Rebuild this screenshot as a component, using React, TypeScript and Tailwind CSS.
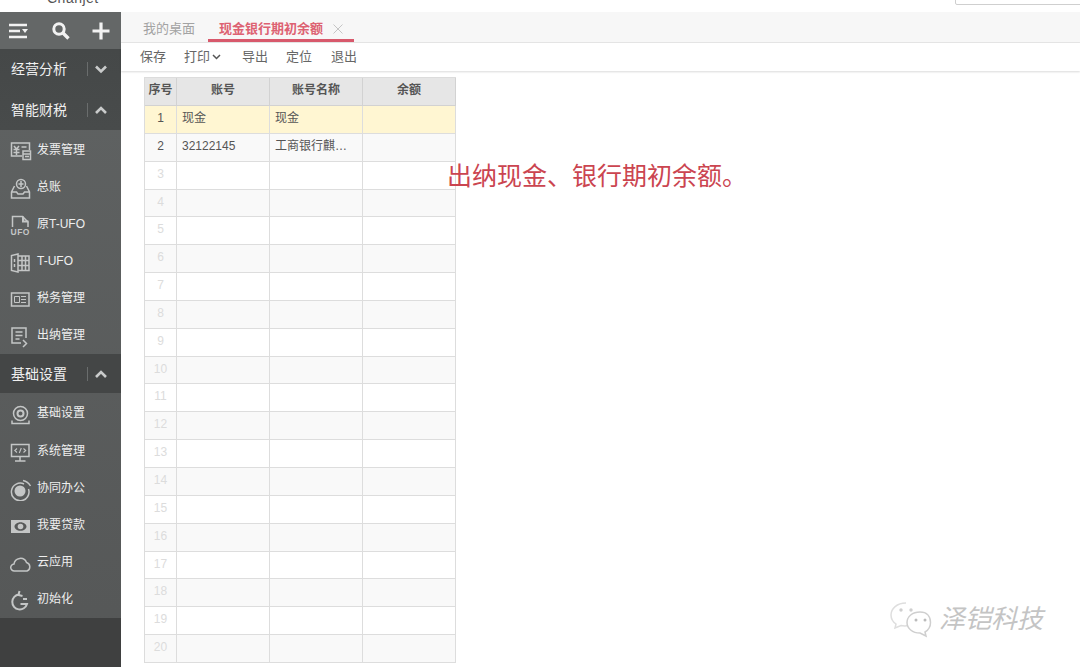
import React from "react";

const font = { fontFamily: '"Liberation Sans","Noto Sans CJK SC",sans-serif' };

const s = { fill: "none", stroke: "#c4c6c6", strokeWidth: 1.5 } as const;

const icons: Record<string, React.ReactNode> = {
  invoice: (
    <>
      <path {...s} d="M12 15H1.500V2H19.500V9" />
      <path {...s} d="M4 5l2.500 3 2.500-3M3.500 8.500h6M3.500 11.500h6M6.500 8V14M11.500 6h5" />
      <path {...s} d="M13 10h7.500v8.500H13zM13 13h7.500M15 15.500h4" />
    </>
  ),
  ledger: (
    <>
      <circle {...s} cx="11" cy="6" r="4.500" />
      <path {...s} d="M11 3v6M8.500 6h5" />
      <path {...s} d="M4.500 8L1.500 14v6h18v-6l-3-6M1.500 14h5l1.500 2h5l1.500-2h5" />
    </>
  ),
  ufo: (
    <>
      <path {...s} d="M2.500 12V1.500h10l5.500 5.500V12" />
      <path fill="#c4c6c6" d="M12 1.500h2v4h4.500v2H12z" />
      <text x="0.500" y="20" fontSize="8.500" fontWeight="700" fill="#c4c6c6" fontFamily="Liberation Sans" letterSpacing="0.500">UFO</text>
    </>
  ),
  building: (
    <>
      <path {...s} d="M8 2L1.500 3.500v15L8 20zM8 4h11v14.500H8M12 4v14.500M15.500 4v14.500M8 8.500h11M8 13.500h11" />
      <path {...s} d="M4.500 7v3M4.500 12v3" />
    </>
  ),
  tax: (
    <>
      <path {...s} d="M1.500 4h17.500v13H1.500z" />
      <path {...s} strokeWidth="1" d="M4.500 7.500h5v6h-5zM11 7.500h5M11 10.500h5M11 13.500h5" />
    </>
  ),
  cashier: (
    <>
      <path {...s} d="M16 12V2H2v15h9" />
      <path {...s} d="M5.500 6h7M5.500 9.500h7M5.500 13h4M13 14l3.500 3.500L13 21" />
    </>
  ),
  gear: (
    <>
      <circle {...s} cx="10.500" cy="8.500" r="7" />
      <circle {...s} strokeWidth="2" cx="10.500" cy="8.500" r="3" />
      <path {...s} d="M2 15.500v3h17v-3" />
    </>
  ),
  monitor: (
    <>
      <path {...s} d="M1.500 2.500h17.500v12H1.500zM10 15v3.500M5 19h10.500" />
      <path {...s} strokeWidth="1.100" d="M7 6.500L4.800 8.500 7 10.500M13.500 6.500L15.700 8.500 13.500 10.500M11.300 6L9.300 11" />
    </>
  ),
  office: (
    <>
      <circle fill="#c4c6c6" cx="10" cy="12" r="5.500" />
      <path {...s} d="M14 5A8.800 8.800 0 1 0 18.500 10" />
      <path {...s} d="M13 1.500A11 11 0 0 1 20.500 7" />
    </>
  ),
  loan: (
    <>
      <path fill="#c4c6c6" fillRule="evenodd" d="M1 4h19v13H1zM10.500 6.200c-3.500 0-6 2.300-6 4.300s2.500 4.300 6 4.300 6-2.300 6-4.300-2.500-4.300-6-4.300z" />
      <circle fill="#c4c6c6" cx="10.500" cy="10.500" r="2.800" />
    </>
  ),
  cloud: (
    <path {...s} d="M5.500 18H4.500a3.500 3.500 0 0 1-.5-7 6.500 6.500 0 0 1 12.500-1.500 4.500 4.500 0 0 1 .5 8.500z" />
  ),
  init: (
    <>
      <path {...s} strokeWidth="2" d="M9 4.500a7.500 7.500 0 1 0 8 9.500H10.500" />
      <path {...s} strokeWidth="2" d="M9.500 1l-1 4 4 1" />
      <path {...s} strokeWidth="2" d="M13 9h4" />
    </>
  ),
};

function Item({ icon, label, className = "h-[37px]" }: { icon: string; label: string; className?: string }) {
  return (
    <div className={`flex items-center pl-[10px] ${className}`}>
      <svg width="22" height="22" viewBox="0 0 22 22" className="mt-[3px] shrink-0">
        {icons[icon]}
      </svg>
      <span className="-mt-[2px] ml-[5px] text-[12px] leading-none whitespace-nowrap text-[#eeeeee]">{label}</span>
    </div>
  );
}

function Section({ label, open, h }: { label: string; open: boolean; h: string }) {
  return (
    <div className={`flex ${h} items-center pl-[11px]`}>
      <span className="w-[76px] text-[14px] leading-none text-[#f0f0f0]">{label}</span>
      <span className="h-[14px] w-px bg-[#6a6d6d]" />
      <svg width="14" height="10" viewBox="0 0 14 10" className="ml-[6px]">
        <path
          d={open ? "M2 8l5-5 5 5" : "M2 2.500l5 5 5-5"}
          fill="none"
          stroke="#c9cbcb"
          strokeWidth="2.600"
        />
      </svg>
    </div>
  );
}

const rows = Array.from({ length: 20 }, (_, i) => i + 1);
const toolbar = [
  { t: "保存", c: "" },
  { t: "打印", c: "ml-[18px]" },
  { t: "导出", c: "ml-[21px]" },
  { t: "定位", c: "ml-[18px]" },
  { t: "退出", c: "ml-[19px]" },
];

export default function App() {
  return (
    <div className="relative h-[667px] w-[1080px] overflow-hidden bg-white" style={font}>
      {/* top strip */}
      <div className="relative h-[12px] overflow-hidden">
        <span className="absolute -top-[10px] left-[47px] text-[14px] leading-[16px] tracking-[0.5px] text-[#555]">
          Chanjet
        </span>
        <div className="absolute -top-[20px] left-[955px] h-[25px] w-[140px] rounded-[2px] border border-[#cfcfcf]" />
      </div>

      <div className="flex h-[655px]">
        {/* sidebar */}
        <aside className="flex w-[121px] shrink-0 flex-col bg-gradient-to-b from-[#606363] to-[#555757]">
          <div className="flex h-[37px] items-center bg-[#646767] pl-[9px]">
            <svg width="20" height="18" viewBox="0 0 20 18">
              <path d="M0 3h18M0 9h11M0 15h18" stroke="#f2f2f2" strokeWidth="2.400" fill="none" />
              <path d="M13 7h6l-3 4z" fill="#f2f2f2" />
            </svg>
            <svg width="20" height="20" viewBox="0 0 20 20" className="ml-[22px]">
              <circle cx="8" cy="8" r="5.200" fill="none" stroke="#f2f2f2" strokeWidth="3" />
              <path d="M12 12l5.500 5.500" stroke="#f2f2f2" strokeWidth="3.400" />
            </svg>
            <svg width="18" height="18" viewBox="0 0 18 18" className="ml-[21px]">
              <path d="M9 0.500v17M0.500 9h17" stroke="#f2f2f2" strokeWidth="3.200" />
            </svg>
          </div>
          <div className="bg-gradient-to-b from-[#454848] to-[#484b4b]">
            <Section label="经营分析" open={false} h="h-[40px]" />
            <Section label="智能财税" open h="h-[41px]" />
          </div>
          <div className="pt-[2px]">
            <Item icon="invoice" label="发票管理" />
            <Item icon="ledger" label="总账" />
            <Item icon="ufo" label="原T-UFO" />
            <Item icon="building" label="T-UFO" />
            <Item icon="tax" label="税务管理" />
            <Item icon="cashier" label="出纳管理" />
          </div>
          <div className="bg-[#444646]">
            <Section label="基础设置" open h="h-[39px]" />
          </div>
          <div className="pt-[2px]">
            <Item icon="gear" label="基础设置" className="h-[38px]" />
            <Item icon="monitor" label="系统管理" />
            <Item icon="office" label="协同办公" />
            <Item icon="loan" label="我要贷款" />
            <Item icon="cloud" label="云应用" />
            <Item icon="init" label="初始化" />
          </div>
          <div className="flex-1 bg-[#3f4040]" />
        </aside>

        {/* main */}
        <main className="min-w-0 flex-1">
          <div className="flex h-[31px] border-b border-[#e6e6e6] bg-[#f7f7f7] pl-[22px] text-[13px]">
            <span className="pt-[10px] leading-none text-[#a3a3a3]">我的桌面</span>
            <div className="ml-[13px] flex h-[30px] w-[146px] items-start border-b-[3px] border-[#d8596c] pt-[10px] pl-[11px]">
              <span className="leading-none font-bold text-[#dd6272]">现金银行期初余额</span>
              <svg width="10" height="10" viewBox="0 0 10 10" className="mt-[2px] ml-[10px]">
                <path d="M0.500 0.500l9 9M9.500 0.500l-9 9" stroke="#c5c5c5" strokeWidth="1" />
              </svg>
            </div>
          </div>
          <div className="flex h-[28px] items-center pb-[1px] pl-[19px] text-[13px] text-[#666] shadow-[0_1px_2px_rgba(0,0,0,0.15)]">
            {toolbar.map(({ t, c }) => (
              <span key={t} className={`flex items-center leading-none ${c}`}>
                {t}
                {t === "打印" && (
                  <svg width="9" height="6" viewBox="0 0 9 6" className="ml-[2px]">
                    <path d="M1 1l3.500 3.500L8 1" fill="none" stroke="#555" strokeWidth="1.500" />
                  </svg>
                )}
              </span>
            ))}
          </div>

          {/* table */}
          <div className="mt-[6px] ml-[23px] w-[312px] border-t border-l border-[#dcdcdc] text-[12px] text-[#555]">
            <div className="grid h-[28px] grid-cols-[32px_93px_93px_93px] bg-[#e6e6e6] text-center font-bold text-[#555]">
              {["序号", "账号", "账号名称", "余额"].map((t) => (
                <div key={t} className="whitespace-nowrap border-r border-b border-[#d2d2d2] leading-[25px]">
                  {t}
                </div>
              ))}
            </div>
            {rows.map((n) => {
              const bg = n === 1 ? "bg-[#fff6d2]" : n % 2 === 0 ? "bg-[#f9f9f9]" : "bg-white";
              const cell = "overflow-hidden border-r border-b border-[#dddddd] px-[5px] leading-[25px] whitespace-nowrap";
              return (
                <div key={n} className={`grid h-[27.85px] grid-cols-[32px_93px_93px_93px] ${bg}`}>
                  <div className={`${cell} text-center ${n <= 2 ? "text-[#555]" : "text-[#dcdcdc]"}`}>{n}</div>
                  <div className={cell}>{n === 1 ? "现金" : n === 2 ? "32122145" : ""}</div>
                  <div className={cell}>{n === 1 ? "现金" : n === 2 ? "工商银行麒…" : ""}</div>
                  <div className={cell} />
                </div>
              );
            })}
          </div>
        </main>
      </div>

      {/* annotation over the page */}
      <div className="absolute top-[160px] left-[447px] text-[25px] leading-[32px] whitespace-nowrap text-[#cb4550]">
        出纳现金、银行期初余额。
      </div>

      {/* watermark */}
      <div className="absolute top-[600px] left-[889px] flex items-center">
        <svg width="46" height="38" viewBox="0 0 46 38">
          <path d="M17 3C8 3 2 8.500 2 15c0 4 2 7 5 9l-1 4 6-2.500c2 .5 4 .5 6 .3" fill="none" stroke="#dedede" strokeWidth="1.500" />
          <path d="M31 12c-7.500 0-13 4.500-13 10.500S23.500 33 31 33l6 3-1-4c3.500-2 5.500-5.500 5.500-9.500C41.500 16.500 38 12 31 12z" fill="none" stroke="#cfcfcf" strokeWidth="1.500" />
          <circle cx="12" cy="10" r="1.700" fill="#cfcfcf" />
          <circle cx="22" cy="10" r="1.700" fill="#cfcfcf" />
          <circle cx="27" cy="20" r="1.500" fill="#bbb" />
          <circle cx="36" cy="20" r="1.500" fill="#bbb" />
        </svg>
        <span className="ml-[4px] text-[26px] leading-none text-[#c4c4c4] italic">泽铠科技</span>
      </div>
    </div>
  );
}
